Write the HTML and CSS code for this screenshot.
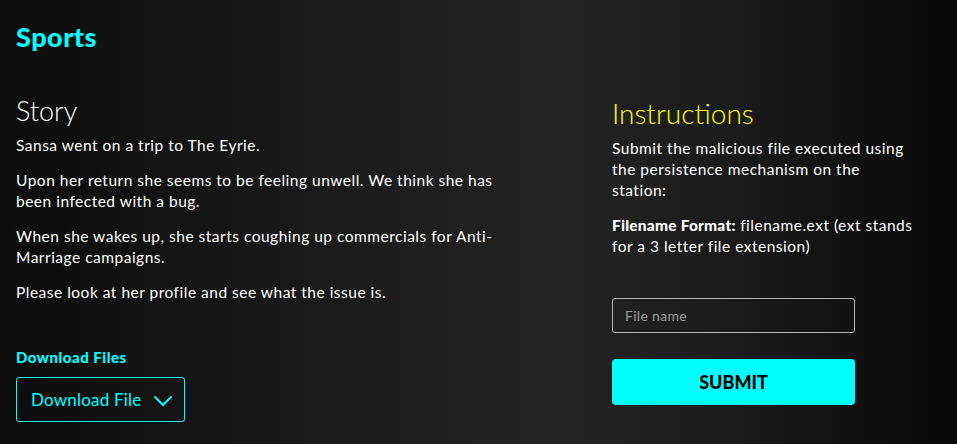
FILE: index.html
```html
<!DOCTYPE html>
<html lang="en">
<head>
<meta charset="utf-8">
<title>Sports</title>
<link rel="stylesheet" href="styles.css">
</head>
<body>
<main class="page">
  <h1 class="title">Sports</h1>
  <div class="columns">
    <section class="story">
      <h2 class="story-heading">Story</h2>
      <p>Sansa went on a trip to The Eyrie.</p>
      <p>Upon her return she seems to be feeling unwell. We think she has been infected with a bug.</p>
      <p>When she wakes up, she starts coughing up commercials for Anti-Marriage campaigns.</p>
      <p>Please look at her profile and see what the issue is.</p>
      <h3 class="files-heading">Download Files</h3>
      <button class="download" type="button">
        <span>Download File</span>
        <svg class="chevron" width="20" height="12" viewBox="0 0 20 12" aria-hidden="true"><path d="M2 2 L10 10 L18 2" fill="none" stroke="#00ffff" stroke-width="2" stroke-linecap="round" stroke-linejoin="round"/></svg>
      </button>
    </section>
    <section class="instructions">
      <h2 class="instr-heading">Instructions</h2>
      <p>Submit the malicious file executed using the persistence mechanism on the station:</p>
      <p><strong>Filename Format:</strong> filename.ext (ext stands for a 3 letter file extension)</p>
      <form class="answer">
        <input class="field" type="text" placeholder="File name">
        <button class="submit" type="button">SUBMIT</button>
      </form>
    </section>
  </div>
</main>
</body>
</html>
```
FILE: styles.css
```css
html, body {
  margin: 0;
  height: 100%;
}
body {
  background: linear-gradient(90deg, #0c0c0c 0%, #1b1b1b 35%, #242424 58%, #1b1b1b 76%, #080808 100%);
  color: #ffffff;
  font-family: Lato, "Noto Sans", sans-serif;
  overflow: hidden;
}
.page {
  padding: 21px 16px 0 16px;
}
.title {
  margin: 0;
  color: #00ffff;
  font-size: 27px;
  font-weight: 900;
  line-height: 32px;
  letter-spacing: 0.5px;
}
.columns {
  display: flex;
  gap: 90px;
  margin-top: 41px;
}
.story {
  width: 506px;
}
.story-heading {
  margin: 0 0 7px 0;
  font-size: 27px;
  font-weight: 300;
  line-height: 34px;
}
p {
  margin: 0 0 14px 0;
  font-size: 15.5px;
  line-height: 21px;
  letter-spacing: 0.5px;
}
.files-heading {
  margin: 44px 0 10px 0;
  color: #00ffff;
  font-size: 15px;
  font-weight: 900;
  line-height: 20px;
  letter-spacing: 0.5px;
}
.download {
  display: flex;
  align-items: center;
  gap: 12px;
  height: 45px;
  padding: 0 11px 0 14px;
  background: transparent;
  border: 1px solid #00ffff;
  border-radius: 3px;
  color: #00ffff;
  font-family: inherit;
  font-size: 17px;
  letter-spacing: 0.2px;
}
.chevron {
  margin-top: 2px;
}
.instructions {
  width: 304px;
  padding-top: 2px;
}
.instr-heading {
  margin: 0 0 8px 0;
  color: #ffff00;
  font-size: 28px;
  font-weight: 300;
  line-height: 34px;
}
strong {
  font-weight: 900;
  letter-spacing: 0.2px;
}
.answer {
  display: flex;
  flex-direction: column;
  gap: 26px;
  width: 243px;
  margin-top: 41px;
}
.field {
  box-sizing: border-box;
  height: 35px;
  padding: 0 12px;
  background: transparent;
  border: 1px solid #b5b5b5;
  border-radius: 3px;
  color: #ffffff;
  font-family: inherit;
  font-size: 14px;
  letter-spacing: 0.3px;
}
.field::placeholder {
  color: #9a9a9a;
}
.submit {
  height: 46px;
  background: #00ffff;
  border: 0;
  border-radius: 4px;
  color: #000000;
  font-family: inherit;
  font-size: 18px;
  font-weight: 900;
}
```
